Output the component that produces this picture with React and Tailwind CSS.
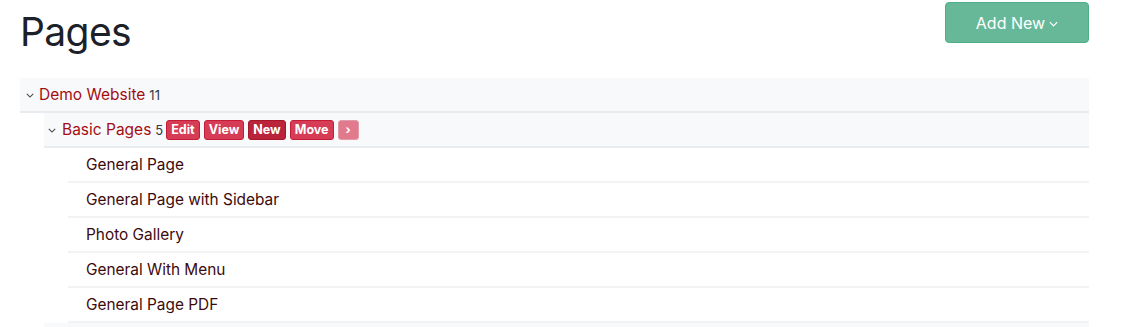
import React from 'react';

const pages = ['General Page', 'General Page with Sidebar', 'Photo Gallery', 'General With Menu', 'General Page PDF'];

function Chevron({ className }) {
  return (
    <svg viewBox="0 0 10 6" className={className} fill="none" stroke="currentColor" strokeWidth="1.3">
      <path d="M1 1l4 4 4-4" />
    </svg>
  );
}

function Action({ label, tone }) {
  const tones = {
    main: 'bg-[#d63c55] border-[#c41c36]',
    dark: 'bg-[#b9243b] border-[#a5152b]',
  };
  return (
    <span className={`text-[12.5px] font-bold text-white px-[4px] h-[20px] leading-[18px] rounded-[3px] border ${tones[tone]}`}>
      {label}
    </span>
  );
}

export default function App() {
  return (
    <div className="w-[1125px] h-[327px] overflow-hidden bg-white font-['Inter','Liberation_Sans',sans-serif]">
      <div className="flex items-start justify-between pl-5 pr-9">
        <h1 className="text-[39px] leading-none text-[#1c2129] mt-[12px] tracking-[-0.6px]">Pages</h1>
        <button className="mt-[2px] w-[144px] h-[41px] rounded-[4px] bg-[#66b898] border border-[#4daf86] text-white text-[16px] flex items-center justify-center gap-1">
          Add New
          <Chevron className="w-[9px] h-[6px] mt-[2px]" />
        </button>
      </div>

      <div className="mt-[27px] ml-5 mr-9">
        <div className="h-[35px] bg-[#f8f9fb] border-b-2 border-[#e8ebef] flex items-center pl-[6px]">
          <Chevron className="w-[8px] h-[5px] text-[#444] mt-[2px]" />
          <span className="ml-[5px] flex items-baseline">
            <span className="text-[15.5px] text-[#a30d12]">Demo Website</span>
            <span className="ml-[4px] text-[13px] text-[#333a45]">11</span>
          </span>
        </div>

        <div className="ml-6">
          <div className="h-[35px] bg-[#f8f9fb] border-b-2 border-[#e8ebef] flex items-center pl-[4px]">
            <Chevron className="w-[8px] h-[5px] text-[#444] mt-[2px]" />
            <span className="ml-[6px] flex items-baseline">
              <span className="text-[15.5px] text-[#a30d12]">Basic Pages</span>
              <span className="ml-[4px] text-[13px] text-[#333a45]">5</span>
            </span>
            <div className="ml-[3px] flex items-center gap-[4px]">
              <Action label="Edit" tone="main" />
              <Action label="View" tone="main" />
              <Action label="New" tone="dark" />
              <Action label="Move" tone="main" />
              <span className="w-[21px] h-[20px] rounded-[3px] bg-[#e07a8c] border border-[#e39aa8] text-white text-[12px] font-bold flex items-center justify-center">›</span>
            </div>
          </div>
          <div className="ml-6 bg-white">
            {pages.map((p) => (
              <div key={p} className="h-[35px] border-b-2 border-[#f3f3f4] flex items-center pl-[18px] text-[15.4px] text-[#3d0a0c]">
                {p}
              </div>
            ))}
          </div>
          <div className="h-[35px] bg-[#f8f9fb]" />
        </div>
      </div>
    </div>
  );
}
